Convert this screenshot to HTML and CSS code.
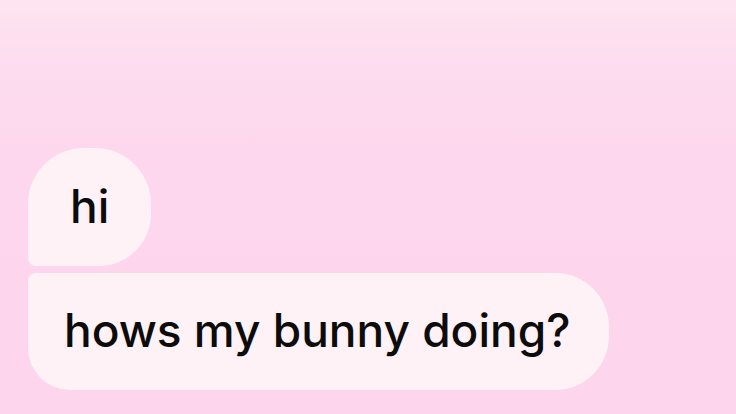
FILE: index.html
```html
<!DOCTYPE html>
<html>
<head>
<meta name="viewport" content="width=device-width, initial-scale=1.0">
<link rel="stylesheet" href="styles.css">
</head>
<body>
	<div class="chat">
		<div class="bubble first">hi</div>
		<div class="bubble last">hows my bunny doing?</div>
	</div>
</body>
</html>
```

FILE: styles.css
```css
* {
	box-sizing: border-box;
}
html, body {
	height: 100%;
}
body {
	margin: 0;
	overflow: hidden;
	font-family: Inter, "Liberation Sans", Arial, sans-serif;
	background: linear-gradient(to bottom, #fee4f0 0px, #fddcef 70px, #fdd7ed 170px, #fdd5ec 100%);
}
.chat {
	display: flex;
	flex-direction: column;
	align-items: flex-start;
	gap: 7px;
	padding: 148px 0 0 28px;
}
.bubble {
	height: 117px;
	line-height: 115px;
	font-size: 46px;
	font-weight: 500;
	color: #0c0c0c;
	background: #fff2f6;
	white-space: nowrap;
}
/* grouped messages: the corner between them stays tight */
.first {
	height: 118px;
	line-height: 116px;
	padding: 0 42px;
	border-radius: 56px 56px 52px 8px;
}
.last {
	padding: 0 39px 0 36px;
	border-radius: 8px 54px 54px 42px;
}
```
